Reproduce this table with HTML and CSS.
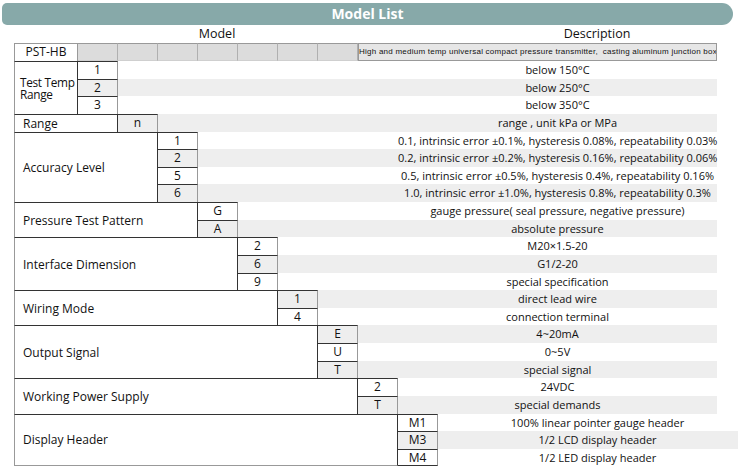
FILE: index.html
```html
<!DOCTYPE html>
<html>
<head>
<meta charset="utf-8">
<link rel="stylesheet" href="styles.css">
</head>
<body>
<div class="title">Model List</div>
<div class="colhead"><span class="mh">Model</span><span class="dh">Description</span></div>
<div class="tbl">
  <div class="pst-row">
    <div class="pst">PST-HB</div>
    <div class="gc"></div><div class="gc"></div><div class="gc"></div><div class="gc"></div><div class="gc"></div><div class="gc"></div><div class="gc"></div>
    <div class="pdesc">High and medium temp universal compact pressure transmitter,&nbsp; casting aluminum junction box</div>
  </div>

  <div class="grp">
    <div class="lab w1 narrow"><span class="ln">Test Temp</span><span class="ln">Range</span></div>
    <div class="rows">
      <div class="r"><div class="code">1</div><div class="d"><span class="t">below 150°C</span></div></div>
      <div class="r alt"><div class="code">2</div><div class="d"><span class="t">below 250°C</span></div></div>
      <div class="r"><div class="code">3</div><div class="d"><span class="t">below 350°C</span></div></div>
    </div>
  </div>

  <div class="grp">
    <div class="lab w2">Range</div>
    <div class="rows">
      <div class="r alt"><div class="code">n</div><div class="d"><span class="t">range , unit kPa or MPa</span></div></div>
    </div>
  </div>

  <div class="grp">
    <div class="lab w3">Accuracy Level</div>
    <div class="rows">
      <div class="r"><div class="code">1</div><div class="d"><span class="t">0.1, intrinsic error ±0.1%, hysteresis 0.08%, repeatability 0.03%</span></div></div>
      <div class="r alt"><div class="code">2</div><div class="d"><span class="t">0.2, intrinsic error ±0.2%, hysteresis 0.16%, repeatability 0.06%</span></div></div>
      <div class="r"><div class="code">5</div><div class="d"><span class="t">0.5, intrinsic error ±0.5%, hysteresis 0.4%, repeatability 0.16%</span></div></div>
      <div class="r alt"><div class="code">6</div><div class="d"><span class="t">1.0, intrinsic error ±1.0%, hysteresis 0.8%, repeatability 0.3%</span></div></div>
    </div>
  </div>

  <div class="grp">
    <div class="lab w4">Pressure Test Pattern</div>
    <div class="rows">
      <div class="r"><div class="code">G</div><div class="d"><span class="t">gauge pressure( seal pressure, negative pressure)</span></div></div>
      <div class="r alt"><div class="code">A</div><div class="d"><span class="t">absolute pressure</span></div></div>
    </div>
  </div>

  <div class="grp">
    <div class="lab w5">Interface Dimension</div>
    <div class="rows">
      <div class="r"><div class="code">2</div><div class="d"><span class="t">M20×1.5-20</span></div></div>
      <div class="r alt"><div class="code">6</div><div class="d"><span class="t">G1/2-20</span></div></div>
      <div class="r"><div class="code">9</div><div class="d"><span class="t">special specification</span></div></div>
    </div>
  </div>

  <div class="grp">
    <div class="lab w6">Wiring Mode</div>
    <div class="rows">
      <div class="r alt"><div class="code">1</div><div class="d"><span class="t">direct lead wire</span></div></div>
      <div class="r"><div class="code">4</div><div class="d"><span class="t">connection terminal</span></div></div>
    </div>
  </div>

  <div class="grp">
    <div class="lab w7">Output Signal</div>
    <div class="rows">
      <div class="r alt"><div class="code">E</div><div class="d"><span class="t">4~20mA</span></div></div>
      <div class="r"><div class="code">U</div><div class="d"><span class="t">0~5V</span></div></div>
      <div class="r alt"><div class="code">T</div><div class="d"><span class="t">special signal</span></div></div>
    </div>
  </div>

  <div class="grp">
    <div class="lab w8">Working Power Supply</div>
    <div class="rows">
      <div class="r"><div class="code">2</div><div class="d"><span class="t">24VDC</span></div></div>
      <div class="r alt"><div class="code">T</div><div class="d"><span class="t">special demands</span></div></div>
    </div>
  </div>

  <div class="grp last">
    <div class="lab w9">Display Header</div>
    <div class="rows">
      <div class="r"><div class="code">M1</div><div class="d"><span class="t">100% linear pointer gauge header</span></div></div>
      <div class="r alt"><div class="code">M3</div><div class="d"><span class="t">1/2 LCD display header</span></div></div>
      <div class="r"><div class="code">M4</div><div class="d"><span class="t">1/2 LED display header</span></div></div>
    </div>
  </div>
</div>
</body>
</html>
```

FILE: styles.css
```css
* { box-sizing: border-box; }
html, body { margin: 0; padding: 0; background: #fff; }
body {
  width: 738px;
  height: 474px;
  overflow: hidden;
  font-family: "Open Sans", "Noto Sans", sans-serif;
  color: #111;
}
.title {
  margin: 3px 5px 0 2px;
  height: 22px;
  background: #87a9a9;
  border-radius: 5px 11px 11px 5px;
  color: #fff;
  font-weight: 700;
  font-size: 14px;
  line-height: 22px;
  text-align: center;
}
.colhead {
  display: flex;
  height: 18px;
  font-size: 12.5px;
  line-height: 18px;
}
.mh { margin-left: 14px; width: 406px; text-align: center; }
.dh { margin-left: 47px; width: 260px; text-align: center; }

.tbl {
  margin-left: 14px;
  width: 703px;
  font-size: 12px;
}
.pst-row {
  display: flex;
  height: 18px;
}
.pst {
  width: 64px;
  border: 1px solid #999;
  border-bottom: 0;
  text-align: center;
  line-height: 16px;
}
.gc {
  width: 40px;
  background: #dcdcdc;
  border-top: 1px solid #999;
  border-right: 1px solid #b0b0b0;
  border-bottom: 1px solid #cfcfcf;
}
.pdesc {
  flex: 1;
  background: #e6e6e6;
  border: 1px solid #999;
  font-family: "Liberation Sans", Arial, sans-serif;
  font-size: 8px;
  line-height: 15px;
  white-space: nowrap;
  overflow: hidden;
  text-align: center;
  letter-spacing: 0.24px;
}

.grp { display: flex; }
.lab {
  flex-shrink: 0;
  display: flex;
  align-items: center;
  padding-left: 8px;
  border-top: 1px solid #333;
  border-right: 1px solid #333;
  border-left: 1px solid #999;
  line-height: 13px;
  white-space: nowrap;
}
.lab.narrow {
  padding-left: 5px;
  flex-direction: column;
  align-items: flex-start;
  justify-content: center;
  letter-spacing: -0.3px;
  font-size: 11.8px;
}
.ln { display: block; height: 12px; line-height: 12px; }
.w1 { width: 64px; }
.w2 { width: 104px; }
.w3 { width: 144px; }
.w4 { width: 184px; }
.w5 { width: 224px; }
.w6 { width: 264px; }
.w7 { width: 304px; }
.w8 { width: 344px; }
.w9 { width: 384px; }

.rows { flex: 1; display: flex; flex-direction: column; }
.r {
  display: flex;
  height: 17.64px;
  background: #fff;
}
.r.alt { background: #eeeeee; }
.code {
  width: 40px;
  flex-shrink: 0;
  border-top: 1px solid #333;
  border-right: 1px solid #999;
  text-align: center;
  line-height: 16px;
}
.d {
  flex: 1;
  display: flex;
  justify-content: flex-end;
  min-width: 0;
}
.t {
  flex-shrink: 0;
  width: 319px;
  text-align: center;
  font-size: 11px;
  line-height: 17px;
  white-space: nowrap;
}
.grp.last .lab { border-bottom: 1px solid #999; }
.grp.last .r:last-child .code { border-bottom: 1px solid #333; }
```
